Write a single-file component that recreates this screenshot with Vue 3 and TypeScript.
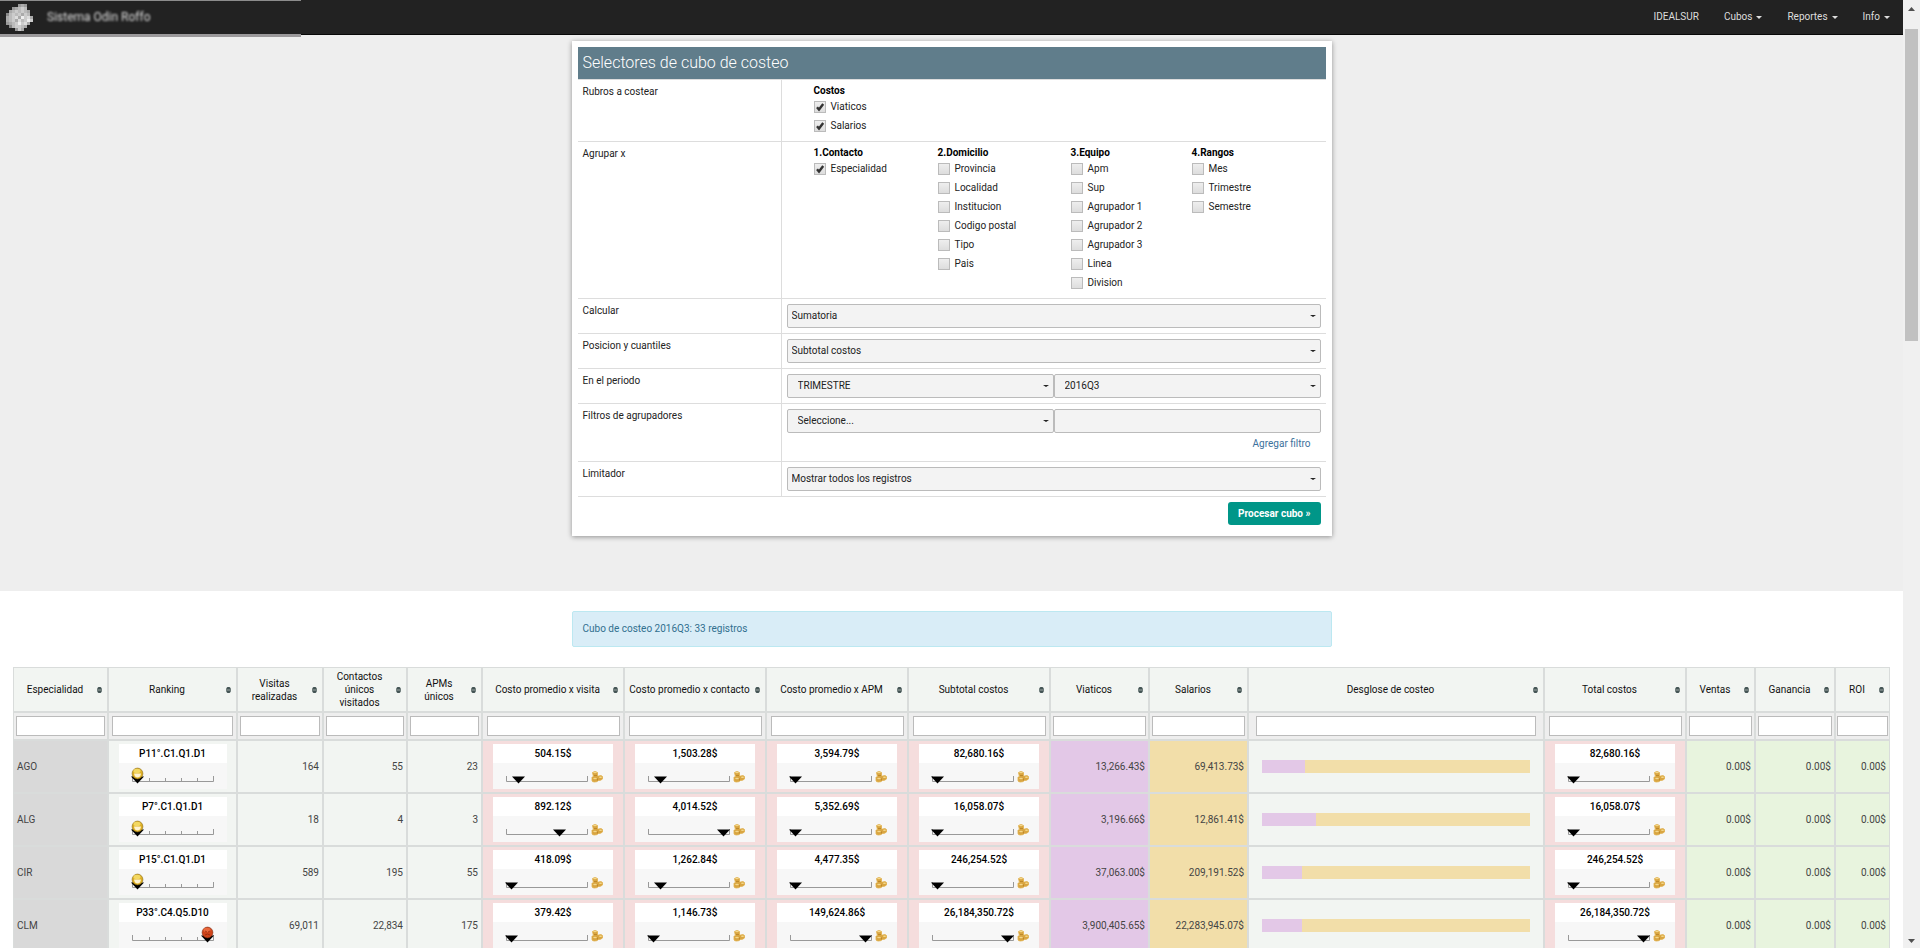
<script setup lang="ts">
import { reactive, ref } from 'vue'

interface CheckGroup {
  title: string
  items: string[]
}
interface Gauge {
  value: string
  pos: number
}
interface Row {
  name: string
  rank: string
  rankPos: number
  low: boolean
  visits: string
  contacts: string
  apms: string
  gauges: Gauge[]
  viaticos: string
  salarios: string
  share: number
  total: Gauge
}

const menu = [
  { label: 'IDEALSUR', caret: false },
  { label: 'Cubos', caret: true },
  { label: 'Reportes', caret: true },
  { label: 'Info', caret: true },
]

const costGroups: CheckGroup[] = [{ title: 'Costos', items: ['Viaticos', 'Salarios'] }]
const groupings: CheckGroup[] = [
  { title: '1.Contacto', items: ['Especialidad'] },
  { title: '2.Domicilio', items: ['Provincia', 'Localidad', 'Institucion', 'Codigo postal', 'Tipo', 'Pais'] },
  { title: '3.Equipo', items: ['Apm', 'Sup', 'Agrupador 1', 'Agrupador 2', 'Agrupador 3', 'Linea', 'Division'] },
  { title: '4.Rangos', items: ['Mes', 'Trimestre', 'Semestre'] },
]
const checkRows = [
  { label: 'Rubros a costear', groups: costGroups },
  { label: 'Agrupar x', groups: groupings },
]
const checked = ref<string[]>(['Viaticos', 'Salarios', 'Especialidad'])

const columns = [
  { label: 'Especialidad', width: 95 },
  { label: 'Ranking', width: 129 },
  { label: 'Visitas realizadas', width: 86 },
  { label: 'Contactos únicos visitados', width: 84 },
  { label: 'APMs únicos', width: 75 },
  { label: 'Costo promedio x visita', width: 142 },
  { label: 'Costo promedio x contacto', width: 142 },
  { label: 'Costo promedio x APM', width: 142 },
  { label: 'Subtotal costos', width: 142 },
  { label: 'Viaticos', width: 99 },
  { label: 'Salarios', width: 99 },
  { label: 'Desglose de costeo', width: 296 },
  { label: 'Total costos', width: 142 },
  { label: 'Ventas', width: 69 },
  { label: 'Ganancia', width: 80 },
  { label: 'ROI', width: 55 },
]
const totalWidth = columns.reduce((sum, c) => sum + c.width, 0)
const filters = reactive<Record<string, string>>({})

const g = (value: string, pos: number): Gauge => ({ value, pos })
const rows: Row[] = [
  {
    name: 'AGO', rank: 'P11°.C1.Q1.D1', rankPos: 18, low: true, visits: '164', contacts: '55', apms: '23',
    gauges: [g('504.15$', 25), g('1,503.28$', 25), g('3,594.79$', 18), g('82,680.16$', 18)],
    viaticos: '13,266.43$', salarios: '69,413.73$', share: 16, total: g('82,680.16$', 18),
  },
  {
    name: 'ALG', rank: 'P7°.C1.Q1.D1', rankPos: 18, low: true, visits: '18', contacts: '4', apms: '3',
    gauges: [g('892.12$', 66), g('4,014.52$', 88), g('5,352.69$', 18), g('16,058.07$', 18)],
    viaticos: '3,196.66$', salarios: '12,861.41$', share: 20, total: g('16,058.07$', 18),
  },
  {
    name: 'CIR', rank: 'P15°.C1.Q1.D1', rankPos: 18, low: true, visits: '589', contacts: '195', apms: '55',
    gauges: [g('418.09$', 18), g('1,262.84$', 25), g('4,477.35$', 18), g('246,254.52$', 18)],
    viaticos: '37,063.00$', salarios: '209,191.52$', share: 15, total: g('246,254.52$', 18),
  },
  {
    name: 'CLM', rank: 'P33°.C4.Q5.D10', rankPos: 88, low: false, visits: '69,011', contacts: '22,834', apms: '175',
    gauges: [g('379.42$', 18), g('1,146.73$', 18), g('149,624.86$', 88), g('26,184,350.72$', 88)],
    viaticos: '3,900,405.65$', salarios: '22,283,945.07$', share: 15, total: g('26,184,350.72$', 88),
  },
]

// Grey level of each tile of the emblem; a dot leaves the tile empty.
const emblem = [
  '....9a9..',
  '..9abcb..',
  '.abcbcba.',
  '8bcbcacb.',
  'abcdaecda',
  'abcadbcec',
  '9abcecda.',
  '.8bccba..',
  '...9ca...',
]
const tiles = emblem.flatMap((line, y) =>
  [...line].map((c, x) => ({ x: x * 3, y: y * 3, fill: c === '.' ? '' : `#${c}${c}${c}` })).filter((t) => t.fill),
)
</script>

<template>
  <div class="app">
    <div class="page">
      <header class="nav">
        <a class="brand" href="#">
          <svg width="27" height="27" viewBox="0 0 27 27" aria-hidden="true">
            <rect v-for="t in tiles" :key="`${t.x}-${t.y}`" :x="t.x" :y="t.y" width="3" height="3" :fill="t.fill" />
          </svg>
          <span class="brand-name">Sistema Odin Roffo</span>
        </a>
        <nav class="menu">
          <a v-for="m in menu" :key="m.label" href="#">
            {{ m.label }}<svg v-if="m.caret" class="caret" width="6" height="3" viewBox="0 0 6 3" aria-hidden="true"><path d="M0 0h6L3 3z" fill="currentColor" /></svg>
          </a>
        </nav>
      </header>

      <section class="selectors">
        <form class="card" @submit.prevent>
          <h1>Selectores de cubo de costeo</h1>
          <div v-for="r in checkRows" :key="r.label" class="row">
            <div class="name">{{ r.label }}</div>
            <div class="field groups">
              <fieldset v-for="grp in r.groups" :key="grp.title">
                <legend>{{ grp.title }}</legend>
                <label v-for="item in grp.items" :key="item" class="check">
                  <input v-model="checked" type="checkbox" :value="item" />
                  <svg class="tick" width="12" height="12" viewBox="0 0 12 12" aria-hidden="true"><path d="M3 6.2l2 2.3L9.2 3" fill="none" stroke="#333" stroke-width="2.4" /></svg>
                  <span>{{ item }}</span>
                </label>
              </fieldset>
            </div>
          </div>
          <div class="row">
            <label class="name" for="calc">Calcular</label>
            <div class="field"><div class="select"><select id="calc"><option>Sumatoria</option></select></div></div>
          </div>
          <div class="row">
            <label class="name" for="pos">Posicion y cuantiles</label>
            <div class="field"><div class="select"><select id="pos"><option>Subtotal costos</option></select></div></div>
          </div>
          <div class="row">
            <label class="name" for="period">En el periodo</label>
            <div class="field pair">
              <div class="select"><select id="period"><option>TRIMESTRE</option></select></div>
              <div class="select"><select aria-label="Trimestre"><option>2016Q3</option></select></div>
            </div>
          </div>
          <div class="row">
            <label class="name" for="filter">Filtros de agrupadores</label>
            <div class="field">
              <div class="pair">
                <div class="select"><select id="filter"><option>Seleccione...</option></select></div>
                <input class="text" type="text" aria-label="Valor del filtro" />
              </div>
              <div class="add"><a href="#">Agregar filtro</a></div>
            </div>
          </div>
          <div class="row">
            <label class="name" for="limit">Limitador</label>
            <div class="field"><div class="select"><select id="limit"><option>Mostrar todos los registros</option></select></div></div>
          </div>
          <div class="actions"><button type="submit">Procesar cubo »</button></div>
        </form>
      </section>

      <main>
        <p class="alert">Cubo de costeo 2016Q3: 33 registros</p>
        <table>
          <colgroup>
            <col v-for="c in columns" :key="c.label" :style="{ width: (c.width / totalWidth) * 100 + '%' }" />
          </colgroup>
          <thead>
            <tr>
              <th v-for="c in columns" :key="c.label" scope="col">
                <button type="button" class="sort">
                  <span>{{ c.label }}</span>
                  <svg width="5" height="6" viewBox="0 0 5 6" aria-hidden="true"><path d="M0 2.6L1.500 0h2L5 2.6zM0 3.4L1.500 6h2L5 3.4z" fill="#455" stroke="#455" stroke-width=".5" /></svg>
                </button>
              </th>
            </tr>
            <tr class="filters">
              <td v-for="c in columns" :key="c.label">
                <input v-model="filters[c.label]" type="text" :aria-label="`Filtrar ${c.label}`" />
              </td>
            </tr>
          </thead>
          <tbody>
            <tr v-for="r in rows" :key="r.name">
              <td class="first">{{ r.name }}</td>
              <td>
                <div class="gauge rank">
                  <strong>{{ r.rank }}</strong>
                  <svg width="108" height="26" viewBox="0 0 108 26" aria-hidden="true">
                    <path d="M13.500 13v5.500h81V13M30.500 15v3M46.500 15v3M62.500 15v3M78.500 15v3" fill="none" stroke="#999" />
                    <path :transform="`translate(${r.rankPos} 0)`" d="M-6 13.500h13L.5 20.500z" fill="#000" />
                    <g :transform="`translate(${r.rankPos} 0)`">
                      <circle cx=".5" cy="10.500" r="5.400" :fill="r.low ? '#dcae22' : '#cf4319'" :stroke="r.low ? '#8a6a14' : '#7c2a10'" stroke-width=".6" />
                      <ellipse cx="0" cy="8" rx="3.500" ry="2.200" :fill="r.low ? '#f3d862' : '#e9683c'" />
                      <path v-if="r.low" d="M-3 10.500h7q-.5 4-3.500 4t-3.500-4z" fill="#fff3cf" />
                      <path v-else d="M-2 9l2 1M3 9l-2 1M-2 13q2.500-2 5 0" stroke="#8f2a0c" stroke-width=".8" fill="none" />
                    </g>
                  </svg>
                </div>
              </td>
              <td class="num">{{ r.visits }}</td>
              <td class="num">{{ r.contacts }}</td>
              <td class="num">{{ r.apms }}</td>
              <template v-for="(cell, i) in [...r.gauges, null, r.total]" :key="i">
                <td v-if="cell" class="cost">
                  <div class="gauge">
                    <strong>{{ cell.value }}</strong>
                    <svg width="120" height="26" viewBox="0 0 120 26" aria-hidden="true">
                      <path d="M13.500 13v5.500h81V13" fill="none" stroke="#999" />
                      <path :transform="`translate(${cell.pos} 0)`" d="M-6 13.500h13L.5 20.500z" fill="#000" />
                      <path d="M99.500 9.500q2.500-2 5 0v3.500h1q3-1 4 .5v2.500q-1.500 1.500-4 1.500-1.500 1.500-4 1.500t-2.500-1.500v-3.500h1.500z" fill="#d9a541" stroke="#e0b04c" stroke-width=".8" stroke-linejoin="round" />
                      <ellipse cx="102" cy="9.500" rx="1.800" ry=".8" fill="#f4d88c" />
                      <ellipse cx="102" cy="15.500" rx="1.800" ry=".8" fill="#f4d88c" />
                      <ellipse cx="107.500" cy="14.200" rx="1.500" ry=".7" fill="#f4d88c" />
                      <path d="M101 12.500h3M104.500 15.500v2" stroke="#b27d22" stroke-width=".7" />
                    </svg>
                  </div>
                </td>
                <template v-else>
                  <td class="num viaticos">{{ r.viaticos }}</td>
                  <td class="num salarios">{{ r.salarios }}</td>
                  <td><div class="bar"><div :style="{ width: r.share + '%' }"></div></div></td>
                </template>
              </template>
              <td v-for="n in 3" :key="n" class="num gain">0.00$</td>
            </tr>
          </tbody>
        </table>
      </main>
    </div>

    <div class="scrollbar" aria-hidden="true">
      <svg width="7" height="4" viewBox="0 0 7 4"><path d="M0 4h7L3.500 0z" fill="#505050" /></svg>
      <div class="track"><div class="thumb"></div></div>
      <svg width="7" height="4" viewBox="0 0 7 4"><path d="M0 0h7L3.500 4z" fill="#505050" /></svg>
    </div>
  </div>
</template>

<style>
body {
  margin: 0;
  background: #fff;
}
</style>

<style scoped>
* {
  box-sizing: border-box;
}
.app {
  display: flex;
  height: 100vh;
  overflow: hidden;
  color: #222;
  font: 10px/14px Roboto, "Liberation Sans", sans-serif;
}
.page {
  flex: 1;
  min-width: 0;
  overflow-y: auto;
  scrollbar-width: none;
}
a {
  text-decoration: none;
}
button,
input,
select {
  font: inherit;
  color: inherit;
}
.nav {
  display: flex;
  justify-content: space-between;
  height: 35px;
  background: #222;
  border-bottom: 1px solid #080808;
}
.brand {
  display: flex;
  align-items: center;
  gap: 14px;
  width: 301px;
  height: 37px;
  padding-left: 6px;
  border-top: 1px solid #8c8c8c;
  border-bottom: 3px solid #9b999b;
}
.brand-name {
  color: #ddd;
  font-size: 12px;
  line-height: 16px;
  padding-bottom: 2px;
  filter: blur(1px);
}
.menu {
  display: flex;
  align-items: center;
  gap: 25px;
  padding: 0 13px 0 0;
}
.menu a {
  color: #ddd;
}
.caret {
  margin-left: 4px;
  vertical-align: 1px;
}
.selectors {
  padding: 6px 0 55px;
  background: #eee;
}
.card {
  width: 760px;
  max-width: 100%;
  margin: 0 auto;
  padding: 6px;
  background: #fff;
  box-shadow: 0 1px 5px rgba(0, 0, 0, 0.4);
}
h1 {
  margin: 0;
  padding: 0 5px;
  background: #607d8b;
  border-bottom: 1px solid #ddd;
  color: #fff;
  font-size: 16px;
  font-weight: 300;
  line-height: 32px;
}
.row {
  display: flex;
  border-bottom: 1px solid #ddd;
}
.name {
  width: 204px;
  padding: 5px;
  border-right: 1px solid #ddd;
}
.field {
  flex: 1;
  padding: 5px;
}
.groups {
  display: grid;
  grid-template-columns: 124px 133px 121px 1fr;
  padding-bottom: 6px;
  padding-left: 32px;
}
fieldset {
  margin: 0;
  padding: 0;
  border: 0;
}
legend {
  padding: 0;
  color: #000;
  font-weight: 700;
  line-height: 12px;
}
.check {
  display: flex;
  align-items: center;
  height: 19px;
}
.check input {
  appearance: none;
  width: 12px;
  height: 12px;
  margin: 0;
  border: 1px solid #bbb;
  background: linear-gradient(#eee, #ddd);
}
.tick {
  margin-left: -12px;
  visibility: hidden;
}
.check input:checked + .tick {
  visibility: visible;
}
.check span {
  margin-left: 5px;
}
.pair {
  display: grid;
  grid-template-columns: 1fr 1fr;
}
.select {
  display: grid;
  align-items: center;
}
.select > select {
  grid-area: 1 / 1;
}
.select::after {
  grid-area: 1 / 1;
  justify-self: end;
  width: 0;
  margin-right: 5px;
  border: 3px solid transparent;
  border-top: 2px solid #222;
  border-bottom: 0;
  content: "";
  pointer-events: none;
}
select,
.text {
  appearance: none;
  width: 100%;
  height: 24px;
  padding: 0 4px;
  border: 1px solid #bbb;
  border-radius: 2px;
  background: #f3f3f3;
}
.pair select {
  padding-left: 10px;
}
.add {
  padding: 4px 10px 5px;
  text-align: right;
}
.add a {
  color: #3c719c;
}
.actions {
  padding: 5px;
  text-align: right;
}
.actions button {
  display: inline-block;
  height: 23px;
  padding: 0 10px;
  border: 0;
  border-radius: 3px;
  background: #009688;
  color: #fff;
  font-weight: 700;
  vertical-align: top;
}
main {
  padding: 20px 13px;
}
.alert {
  width: 760px;
  max-width: 100%;
  margin: 0 auto 20px;
  padding: 10px;
  border: 1px solid #bce8f1;
  border-radius: 2px;
  background: #d9edf7;
  color: #31708f;
  line-height: 14px;
}
table {
  width: 100%;
  border-spacing: 0;
  table-layout: fixed;
}
th,
td {
  padding: 0 3px;
  border: 1px solid #d9dcdb;
  background: #f2f5f2;
  font-weight: 400;
}
th {
  height: 45px;
  padding: 0;
}
.sort {
  display: flex;
  align-items: center;
  gap: 4px;
  width: 100%;
  padding: 0 5px 0 3px;
  border: 0;
  background: none;
  color: #111;
  line-height: 13px;
}
.sort span {
  flex: 1;
}
.filters td {
  height: 28px;
  padding: 0;
  background: #eee;
  text-align: center;
}
.filters input {
  display: block;
  width: 95%;
  height: 20px;
  margin: 0 auto;
  padding: 0 4px;
  border: 1px solid #bbb;
  background: #fff;
}
tbody td {
  height: 53px;
  color: #444;
}
.first {
  background: #d9d9d9;
}
.num {
  text-align: right;
}
.cost {
  background: #f5dddd;
}
.viaticos {
  background: #e3c8e7;
}
.salarios {
  background: #f2dea9;
}
.gain {
  background: #e8f4de;
}
.gauge {
  width: 120px;
  margin: 0 auto;
  background: #f7f7f7;
}
.rank {
  width: 108px;
}
.gauge strong {
  display: block;
  background: #fff;
  color: #000;
  font-weight: 500;
  line-height: 19px;
  text-align: center;
}
.gauge svg {
  display: block;
}
.bar {
  width: 93%;
  height: 13px;
  margin: 0 auto;
  background: #f2dea9;
}
.bar div {
  height: 100%;
  background: #e3c8e7;
}
.scrollbar {
  display: flex;
  flex-direction: column;
  align-items: center;
  width: 17px;
  padding: 7px 0 5px;
  background: #f0f0f0;
}
.track {
  flex: 1;
  padding: 18px 0;
}
.thumb {
  width: 13px;
  height: 35%;
  background: #c1c1c1;
}
</style>
